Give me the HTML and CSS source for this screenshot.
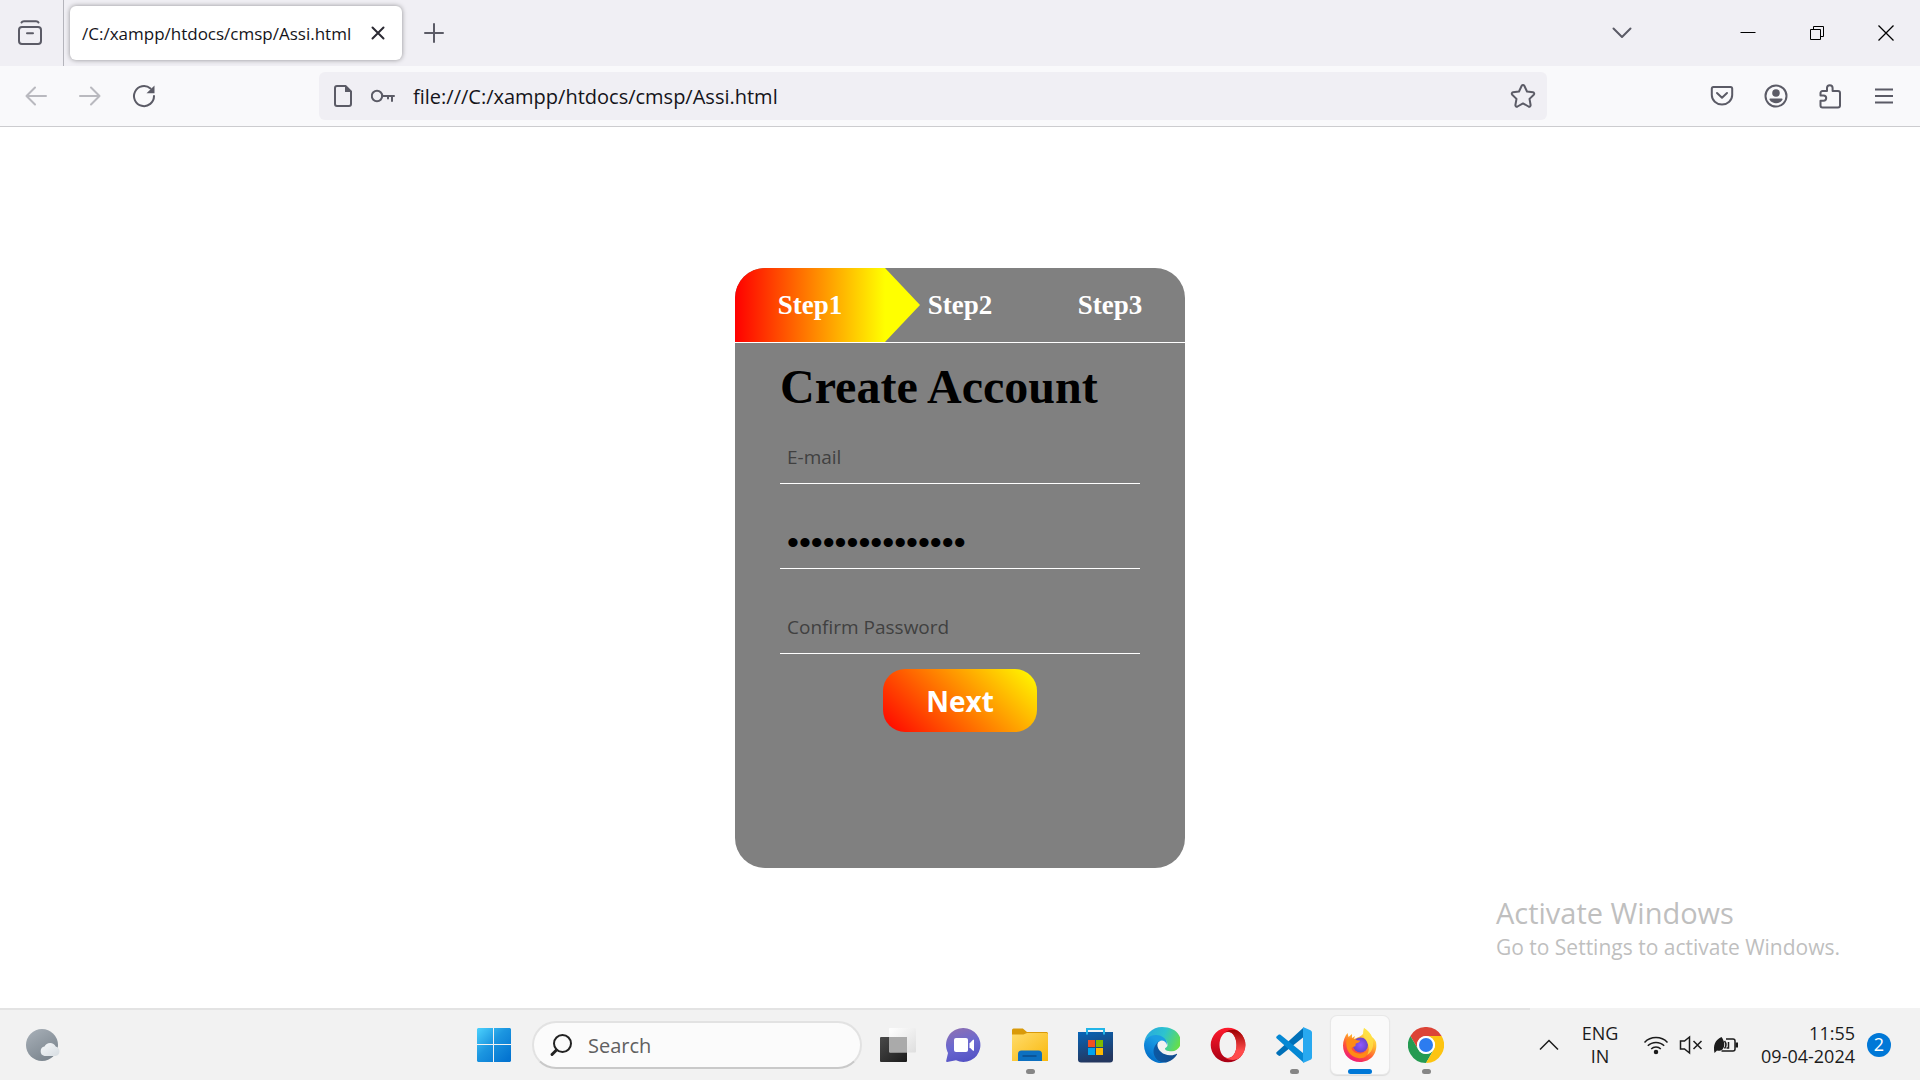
FILE: index.html
```html
<!DOCTYPE html>
<html lang="en">
<head>
<meta charset="utf-8">
<title>/C:/xampp/htdocs/cmsp/Assi.html</title>
<link rel="stylesheet" href="styles.css">
</head>
<body>
<div class="desktop">
  <header class="tabbar">
    <button class="view-button" aria-label="Firefox View">
      <svg class="icon" width="26" height="26" viewBox="0 0 26 26"><rect x="2" y="7" width="22" height="17" rx="3"/><path d="M4.500 2.500C5 1.500 6 1.200 7 1.200h12c1 0 2 .3 2.500 1.300M10 13.200h6"/></svg>
    </button>
    <div class="tab">
      <span class="tab-title">/C:/xampp/htdocs/cmsp/Assi.html</span>
      <button class="tab-close" aria-label="Close tab"><svg class="icon dark" width="14" height="14" viewBox="0 0 14 14"><path d="M1.500 1.500l11 11M12.500 1.500l-11 11"/></svg></button>
    </div>
    <button class="tool" aria-label="New tab"><svg class="icon" width="20" height="20" viewBox="0 0 20 20"><path d="M10 1v18M1 10h18"/></svg></button>
    <button class="tool tab-list" aria-label="List all tabs"><svg class="icon" width="20" height="12" viewBox="0 0 20 12"><path d="M1.500 1.500l8.500 8.500 8.500-8.500"/></svg></button>
    <div class="window-controls">
      <button aria-label="Minimize"><svg class="icon thin" width="16" height="16" viewBox="0 0 16 16"><path d="M.5 7.500h15"/></svg></button>
      <button aria-label="Restore"><svg class="icon thin" width="16" height="16" viewBox="0 0 16 16"><path d="M1.500 4.500h10v10h-10zM4.500 4V1.500h10v10H12"/></svg></button>
      <button aria-label="Close"><svg class="icon thin" width="16" height="16" viewBox="0 0 16 16"><path stroke-width="1.300" d="M.5.5l15 15M15.500.5l-15 15"/></svg></button>
    </div>
  </header>

  <nav class="toolbar" aria-label="Navigation">
    <button class="tool faded" aria-label="Back"><svg class="icon" width="22" height="20" viewBox="0 0 22 20"><path d="M21 10H1.500M10 1.500L1.500 10l8.500 8.500"/></svg></button>
    <button class="tool faded" aria-label="Forward"><svg class="icon" width="22" height="20" viewBox="0 0 22 20"><path d="M1 10h19.500M12 1.500l8.500 8.500-8.500 8.500"/></svg></button>
    <button class="tool" aria-label="Reload"><svg class="icon" width="24" height="24" viewBox="0 0 24 24"><path d="M22 12A10 10 0 1 1 18.500 4.500"/><path class="solid" d="M22.500 1.500v7.700h-8z"/></svg></button>
    <div class="urlbar">
      <svg class="icon" width="20" height="24" viewBox="0 0 20 24"><path d="M4 2h8.500l5.500 5.500V20a2 2 0 0 1-2 2H4a2 2 0 0 1-2-2V4a2 2 0 0 1 2-2z"/><path class="solid" d="M12 1.500l6.500 6.500H12z"/></svg>
      <svg class="icon" width="24" height="16" viewBox="1 0 24 16"><circle cx="7" cy="8" r="5.200"/><path d="M12.200 8H24M22 8v5M18 8v2.500"/></svg>
      <input class="url-input" type="text" aria-label="Address" value="file:///C:/xampp/htdocs/cmsp/Assi.html">
      <button class="star" aria-label="Bookmark this page"><svg class="icon" width="26" height="26" viewBox="0 0 26 26"><path d="M11.700 2.800a1.500 1.500 0 0 1 2.600 0l2.700 5.700 6 .8c1.200.2 1.600 1.500.8 2.400l-4.300 4.200 1.100 6.100c.2 1.100-1 2-2.100 1.500L13 20.400l-5.500 3.100c-1.100.5-2.300-.4-2.100-1.500L6.500 15.900 2.200 11.700c-.8-.9-.4-2.200.8-2.400l6-.8z"/></svg></button>
    </div>
    <button class="tool" aria-label="Save to Pocket"><svg class="icon" width="24" height="22" viewBox="0 0 24 22"><path d="M3.500 2h17A1.800 1.800 0 0 1 22.200 3.800V10a10.200 9.500 0 0 1-20.400 0V3.800A1.800 1.800 0 0 1 3.500 2zM7 8l5 4.800L17 8"/></svg></button>
    <button class="tool" aria-label="Account"><svg class="icon" width="24" height="24" viewBox="0 0 24 24"><circle cx="12" cy="12" r="10.500"/><circle class="fill" cx="12" cy="9" r="3.800"/><path class="fill" d="M6.200 14.500h11.600c.8 0 .9 1 .5 1.600-2.700 4.200-9.900 4.200-12.600 0-.4-.6-.3-1.600.5-1.600z"/></svg></button>
    <button class="tool" aria-label="Extensions"><svg class="icon" width="24" height="26" viewBox="0 0 24 26"><path d="M4.500 8H9V5a2.800 2.800 0 0 1 5.600 0v3H20a2 2 0 0 1 2 2v12.500a2 2 0 0 1-2 2H4.500a2 2 0 0 1-2-2v-4.700h3a2.700 2.700 0 0 0 0-5.400h-3V10a2 2 0 0 1 2-2z"/></svg></button>
    <button class="tool" aria-label="Menu"><svg class="icon" width="18" height="16" viewBox="0 0 18 16"><path d="M0 1.500h18M0 8h18M0 14.500h18"/></svg></button>
  </nav>

  <main class="page">
    <section class="card">
      <ol class="steps">
        <li class="step current">Step1</li>
        <li class="step">Step2</li>
        <li class="step">Step3</li>
      </ol>
      <form class="form">
        <h1 class="form-title">Create Account</h1>
        <input class="field" type="email" placeholder="E-mail" aria-label="E-mail">
        <input class="field secret" type="password" value="mysecretpasswrd" aria-label="Password">
        <input class="field" type="password" placeholder="Confirm Password" aria-label="Confirm Password">
        <button class="next" type="button">Next</button>
      </form>
    </section>
    <aside class="activation">
      <p class="activation-title">Activate Windows</p>
      <p class="activation-text">Go to Settings to activate Windows.</p>
    </aside>
  </main>

  <footer class="taskbar">
    <button class="widgets" aria-label="Weather">
      <svg width="36" height="36" viewBox="0 0 36 36"><defs><linearGradient id="moon" x2=".6" y2="1"><stop stop-color="#a9b1b9"/><stop offset="1" stop-color="#7c868f"/></linearGradient><linearGradient id="cloud" x2="1" y2="1"><stop stop-color="#f6f8fa"/><stop offset="1" stop-color="#d6dce1"/></linearGradient></defs><circle cx="17" cy="18" r="16" fill="url(#moon)"/><path fill="url(#cloud)" d="M19.500 29a4.800 4.800 0 0 1 0-9.400 6.200 6.200 0 0 1 11.200 0A4.800 4.800 0 0 1 30.500 29z"/></svg>
    </button>
    <div class="apps">
      <button class="app" aria-label="Start"><svg width="36" height="36" viewBox="0 0 36 36"><defs><linearGradient id="win" gradientUnits="userSpaceOnUse" x2="32" y2="32"><stop stop-color="#50d6ff"/><stop offset=".5" stop-color="#1c96e0"/><stop offset="1" stop-color="#0474d0"/></linearGradient></defs><path fill="url(#win)" d="M2 1h15v16H1V2zM18 1h16l1 1v15H18zM1 18h16v17H2l-1-1zM18 18h17v16l-1 1H18z"/></svg></button>
      <label class="search">
        <svg width="24" height="24" viewBox="0 0 24 24" fill="none" stroke="#222" stroke-width="2" stroke-linecap="round"><circle cx="13.500" cy="10.500" r="8.500"/><path stroke-width="3" d="M7.500 17L3 21.500"/></svg>
        <input class="search-input" type="text" placeholder="Search" aria-label="Search">
      </label>
      <button class="app" aria-label="Task view"><svg width="36" height="36" viewBox="0 0 36 36"><defs><linearGradient id="tv1" x2="1" y2="1"><stop stop-color="#4a4a4a"/><stop offset="1" stop-color="#1b1b1b"/></linearGradient><linearGradient id="tv2" x2="1" y2="1"><stop stop-color="#fff"/><stop offset="1" stop-color="#dedede"/></linearGradient></defs><rect y="10" width="27" height="25" rx="1" fill="url(#tv1)"/><rect x="9" y="1" width="27" height="24.500" rx="1" fill="url(#tv2)"/><path fill="#aaa" d="M9 10h18v15H9z"/></svg></button>
      <button class="app" aria-label="Chat"><svg width="36" height="36" viewBox="0 0 36 36"><defs><linearGradient id="chat" x1=".3" x2=".6" y2="1"><stop stop-color="#8c70b4"/><stop offset=".5" stop-color="#6a68d0"/><stop offset="1" stop-color="#5452c4"/></linearGradient></defs><path fill="url(#chat)" d="M17.500 1a17 17 0 1 1-7.500 32.300L1.200 35c-.8.100-1.200-.4-1-1.200L2 26A17 17 0 0 1 17.500 1z"/><rect x="8" y="11" width="14" height="14" rx="2" fill="#fff"/><path fill="#fff" d="M23.500 16.500l3.500-3.800h1v11h-1l-3.500-3.500z"/></svg></button>
      <button class="app running" aria-label="File Explorer"><svg width="36" height="36" viewBox="0 0 36 36"><defs><linearGradient id="fold" x2="1" y2="1"><stop stop-color="#ffdc6c"/><stop offset="1" stop-color="#f9b80d"/></linearGradient></defs><path fill="#d99a0a" d="M0 3a1.500 1.500 0 0 1 1.500-1.500h9.300L15 5h20l1 1v5H0z"/><path fill="url(#fold)" d="M0 7.500h11.500L15 6h20l1 1v27H0z"/><path fill="#0d70c0" d="M6 34v-7a3.500 3.500 0 0 1 3.500-3.500h17A3.500 3.500 0 0 1 30 27v7z"/><path stroke="#0a4c8d" stroke-width="1.500" d="M10.500 29h14"/></svg></button>
      <button class="app" aria-label="Microsoft Store"><svg width="36" height="36" viewBox="0 0 36 36"><defs><linearGradient id="store" x2=".3" y2="1"><stop stop-color="#0765b8"/><stop offset="1" stop-color="#24375f"/></linearGradient></defs><path fill="url(#store)" d="M0 5h35v27.500a3 3 0 0 1-3 3H3a3 3 0 0 1-3-3z"/><path fill="none" stroke="#22b5e8" stroke-width="2" d="M9 7.500V2h17v5.500"/><path fill="#f25022" d="M10 13h7v7h-7z"/><path fill="#7fba00" d="M18 13h7v7h-7z"/><path fill="#00a4ef" d="M10 21h7v7h-7z"/><path fill="#ffb900" d="M18 21h7v7h-7z"/></svg></button>
      <button class="app" aria-label="Microsoft Edge"><svg width="36" height="36" viewBox="0 0 256 256"><defs><linearGradient id="e1" x1=".1" y1=".8" x2="1" y2=".7"><stop stop-color="#0c59a4"/><stop offset="1" stop-color="#114a8b"/></linearGradient><linearGradient id="e2" x1=".7" y1=".3" x2=".3" y2="1"><stop stop-color="#1b9de2"/><stop offset=".5" stop-color="#0d84d9"/><stop offset="1" stop-color="#0067c0"/></linearGradient><linearGradient id="e3" x2="1" y1=".3" y2=".6"><stop stop-color="#27a8df"/><stop offset=".5" stop-color="#2dc3cf"/><stop offset="1" stop-color="#67df46"/></linearGradient></defs><path fill="url(#e1)" d="M231 190a94 94 0 0 1-11 5 102 102 0 0 1-36 6c-47 0-89-33-89-74a31 31 0 0 1 17-27c-43 2-54 46-54 72 0 74 68 81 82 81 8 0 20-2 27-5l1 0a128 128 0 0 0 67-53 4 4 0 0 0-4-5z"/><path fill="url(#e2)" d="M106 241a79 79 0 0 1-23-21 81 81 0 0 1 30-120c3-1 8-4 15-4a32 32 0 0 1 25 13 32 32 0 0 1 7 19c0-1 24-80-80-80C36 48 0 90 0 128a130 130 0 0 0 12 56 128 128 0 0 0 156 67 75 75 0 0 1-62-10z"/><path fill="url(#e3)" d="M152 149c-1 1-3 3-3 6 0 3 2 6 5 8 15 11 44 9 44 9a63 63 0 0 0 32-9 65 65 0 0 0 32-56c0-24-8-39-12-46C230 20 182 0 128 0A128 128 0 0 0 0 126C1 88 39 57 84 57c4 0 24 0 43 10 17 9 26 20 32 30 7 12 8 26 8 32 0 5-3 14-15 20z"/></svg></button>
      <button class="app" aria-label="Opera"><svg width="36" height="36" viewBox="0 0 36 36"><defs><linearGradient id="o1" x2="0" y2="1"><stop stop-color="#ff1b2d"/><stop offset="1" stop-color="#a70014"/></linearGradient><linearGradient id="o2" x2="0" y2="1"><stop stop-color="#9c0000"/><stop offset=".7" stop-color="#ff4b4b"/></linearGradient></defs><path fill="url(#o1)" fill-rule="evenodd" d="M18 .7a17.300 17.300 0 1 0 0 34.600 17.300 17.300 0 1 0 0-34.600zM18 5c5 0 8.500 6 8.500 13S23 31 18 31 9.500 25 9.500 18 13 5 18 5z"/><path fill="url(#o2)" d="M14.500 5.500C22 1 27 3 30 5.500a17 17 0 0 1 0 25C27 33 21 34.500 15 30.500c7 2.500 11.500-4 11.500-12.500S22 2.500 14.500 5.500z"/></svg></button>
      <button class="app running" aria-label="Visual Studio Code"><svg width="36" height="36" viewBox="0 0 36 36"><path fill="#0070b8" d="M27 1L.8 25a1.500 1.500 0 0 0 0 2.200L2.500 28.500c.6.500 1.400.5 2 0L27 10.500z"/><path fill="#0588d4" d="M27 35L.8 11.500a1.500 1.500 0 0 1 0-2.200L2.500 7.800c.6-.5 1.400-.5 2 0L27 26z"/><path fill="#28a9f0" d="M27 0l7.500 3.200A2.500 2.500 0 0 1 36 5.500v25c0 1-.6 1.900-1.500 2.300L27 36z"/></svg></button>
      <button class="app running active" aria-label="Firefox"><svg width="36" height="36" viewBox="0 0 36 36"><defs><linearGradient id="f1" x1=".8" y1=".1" x2=".3" y2="1"><stop stop-color="#fff44f"/><stop offset=".35" stop-color="#ffb02e"/><stop offset=".65" stop-color="#ff5634"/><stop offset="1" stop-color="#ed167e"/></linearGradient><radialGradient id="f2"><stop stop-color="#9059ff"/><stop offset="1" stop-color="#6b44c8"/></radialGradient></defs><path fill="url(#f1)" d="M22 1c6 4 7 7 8 9 2 1 3 3 4 5 2 11-5 20-16 20C8 35 1 28 1 18.500 1 14 3 9 5.500 6l1 4L10 7v4l3-2-1 3c9-3 11-6 10-11z"/><circle cx="18.500" cy="18" r="7.500" fill="url(#f2)"/><path fill="#ff8b16" d="M4.500 13c3-3 6-1.500 8-.8 2 1.300 4 1 5.500 1.300.3 2-4 2.500-4.500 3.500 1 3.500-2.500 2-4 4C11 28 24 29 27 21c0 9-6 11-11 10C8 30 3 22 4.500 13z"/><path fill="#ffe045" d="M22 1c6 4 10 10 9 18-1 5-3 7-6 9 3-5 2-10-1-15-3-4-4-7-2-12z" opacity=".8"/></svg></button>
      <button class="app running" aria-label="Chrome"><svg width="36" height="36" viewBox="0 0 36 36"><path fill="#dc4437" d="M2.400 9A18 18 0 0 1 33.600 9H18a9 9 0 0 0-7.800 13.500z"/><path fill="#259b52" d="M2.400 9A18 18 0 0 0 18 36l7.800-13.500a9 9 0 0 1-15.600 0z"/><path fill="#fdc411" d="M33.600 9A18 18 0 0 1 18 36l7.800-13.500A9 9 0 0 0 18 9z"/><circle cx="18" cy="18" r="9" fill="#fff"/><circle cx="18" cy="18" r="7" fill="#2c7cf0"/></svg></button>
    </div>
    <div class="tray">
      <button class="tray-more" aria-label="Show hidden icons"><svg class="tray-icon" width="20" height="12" viewBox="0 0 20 12"><path d="M1 10.500l9-9 9 9"/></svg></button>
      <button class="language">ENG<br>IN</button>
      <button class="status" aria-label="Network, sound and battery">
        <svg class="tray-icon" width="26" height="20" viewBox="0 0 26 20"><path d="M1.500 7.500a16 16 0 0 1 23 0M4.800 10.800a11.600 11.600 0 0 1 16.400 0M8.200 14a6.800 6.800 0 0 1 9.600 0"/><circle cx="13" cy="17" r="1.500" fill="#1b1b1b"/></svg>
        <svg class="tray-icon" width="24" height="20" viewBox="0 0 24 20"><path d="M1.500 6h4L10.500 2v16l-5-4h-4zM14.500 6l8 8M22.500 6l-8 8"/></svg>
        <svg class="tray-icon" width="26" height="20" viewBox="0 0 26 20"><path fill="#1b1b1b" stroke="none" d="M1.500 18C0 10 2 5 8.500 2c3 4 4 9 1 12.500-2 1.500-4 1.500-5.500 1z"/><path d="M13 4h7a2 2 0 0 1 2 2v8a2 2 0 0 1-2 2H8.500M11.500 6c2 2.500 1.500 5.500 0 7.500M15.500 7v6h-2"/><path fill="#1b1b1b" stroke="none" d="M22.500 7.500h2.500v5h-2.500z"/></svg>
      </button>
      <button class="clock">11:55<br>09-04-2024</button>
      <span class="badge">2</span>
    </div>
  </footer>
</div>
</body>
</html>
```
FILE: styles.css
```css
* {
  box-sizing: border-box;
}

body {
  margin: 0;
  font-family: "Open Sans", "Noto Sans", sans-serif;
  color: #15141a;
  background: #fff;
}

button,
input {
  margin: 0;
  padding: 0;
  border: 0;
  background: none;
  font: inherit;
  color: inherit;
  outline: 0;
}

button {
  display: flex;
  align-items: center;
  justify-content: center;
}

svg {
  display: block;
  flex: none;
}

.desktop {
  display: flex;
  flex-direction: column;
  min-height: 100vh;
}

.icon {
  fill: none;
  stroke: #5b5b66;
  stroke-width: 2;
  stroke-linecap: round;
  stroke-linejoin: round;
}

.icon .solid,
.icon .fill {
  fill: #5b5b66;
  stroke: none;
}

.icon.dark {
  stroke: #2b2a33;
}

.icon.thin {
  stroke: #000;
  stroke-width: 1;
  stroke-linecap: butt;
  stroke-linejoin: miter;
}

/* Tab strip */
.tabbar {
  display: flex;
  align-items: center;
  height: 66px;
  background: #f0eff4;
}

.view-button {
  width: 64px;
  height: 66px;
  padding-right: 3px;
  border-right: 1px solid #b4b4bb;
}

.tab {
  display: flex;
  align-items: center;
  justify-content: space-between;
  width: 332px;
  height: 54px;
  margin: 0 5px 0 6px;
  padding: 0 10px 0 12px;
  border-radius: 6px;
  background: #fff;
  box-shadow: 0 0 5px rgba(0, 0, 0, 0.4);
}

.tab-title {
  font-size: 17px;
  white-space: nowrap;
}

.tab-close {
  width: 28px;
  height: 28px;
}

.tool {
  width: 54px;
  height: 54px;
  flex: none;
}

.faded {
  opacity: 0.4;
}

.tab-list {
  margin: 0 64px 0 auto;
}

.window-controls {
  display: flex;
}

.window-controls button {
  width: 69px;
  height: 66px;
}

/* Navigation toolbar */
.toolbar {
  display: flex;
  align-items: center;
  height: 61px;
  padding: 0 9px;
  background: #f9f9fb;
  border-bottom: 1px solid #cccccf;
}

.urlbar {
  display: flex;
  align-items: center;
  flex: 1;
  height: 48px;
  margin: 0 148px;
  padding: 0 9px 0 14px;
  gap: 18px;
  border-radius: 6px;
  background: #f0eff4;
}

.url-input {
  flex: 1;
  min-width: 0;
  height: 48px;
  font-size: 20px;
}

.star {
  width: 30px;
  height: 48px;
}

/* Page content */
.page {
  position: relative;
  flex: 1;
  display: flex;
  justify-content: center;
  align-items: flex-start;
  padding: 141px 0 140px;
}

.card {
  width: 450px;
  min-height: 600px;
  overflow: hidden;
  border-radius: 30px;
  background: #808080;
}

.steps {
  display: grid;
  grid-template-columns: repeat(3, 1fr);
  margin: 0;
  padding: 0;
  list-style: none;
  border-bottom: 1px solid #fff;
}

.step {
  position: relative;
  height: 74px;
  font: bold 27px/74px "Liberation Serif", serif;
  text-align: center;
  color: #fff;
}

.current {
  background: linear-gradient(90deg, #f00, #ff0);
}

.current::after {
  content: "";
  position: absolute;
  top: 0;
  left: 100%;
  width: 35px;
  height: 74px;
  background: #ff0;
  clip-path: polygon(0 0, 100% 50%, 0 100%);
}

.form {
  display: flex;
  flex-direction: column;
  padding: 16px 45px 0;
}

.form-title {
  margin: 0;
  font: bold 48px/55px "Liberation Serif", serif;
  color: #000;
}

.field {
  height: 51px;
  margin: 19px 0 15px;
  padding: 0 7px 2px;
  border-bottom: 1px solid #fff;
  font-size: 19px;
  color: #000;
}

.field::placeholder {
  color: #404040;
  opacity: 1;
}

.secret {
  font-family: "Liberation Sans", sans-serif;
  font-size: 34px;
}

.next {
  align-self: center;
  width: 154px;
  height: 63px;
  border-radius: 22px;
  background: linear-gradient(45deg, #f00, #ff0);
  font-size: 28px;
  font-weight: 700;
  color: #fff;
}

/* Windows activation notice */
.activation {
  position: absolute;
  right: 80px;
  bottom: 46px;
  color: #bfbfbf;
}

.activation p {
  margin: 0;
}

.activation-title {
  font-size: 29px;
  line-height: 38px;
}

.activation-text {
  font-size: 21px;
  line-height: 30px;
}

/* Taskbar */
.taskbar {
  display: grid;
  grid-template-columns: 1fr auto 1fr;
  align-items: center;
  height: 72px;
  padding-top: 2px;
  background: linear-gradient(#e3e3e3, #e3e3e3) 0 0 / calc(100% - 390px) 2px no-repeat #f2f2f2;
}

.widgets {
  width: 60px;
  height: 60px;
  margin-left: 13px;
}

.apps {
  display: flex;
  align-items: center;
}

.app {
  position: relative;
  width: 58px;
  height: 58px;
  margin: 0 4px;
  border-radius: 6px;
}

.active {
  background: #fafafa;
  box-shadow: 0 0 0 1px #e8e8e8, 0 1px 1px 1px #dcdcdc;
}

.running::after {
  content: "";
  position: absolute;
  bottom: 0;
  left: 50%;
  width: 9px;
  height: 5px;
  margin-left: -4px;
  border-radius: 3px;
  background: #868686;
}

.active::after {
  width: 24px;
  margin-left: -12px;
  background: #0078d7;
}

.search {
  display: flex;
  align-items: center;
  width: 330px;
  height: 48px;
  margin: 0 3px 0 5px;
  padding: 0 15px;
  gap: 15px;
  border: 2px solid #e2e2e2;
  border-bottom-color: #c9c9c9;
  border-radius: 24px;
  background: #fbfbfb;
}

.search-input {
  flex: 1;
  min-width: 0;
  font-size: 20px;
}

.search-input::placeholder {
  color: #606060;
  opacity: 1;
}

.tray {
  display: flex;
  align-items: center;
  justify-content: flex-end;
  padding-right: 29px;
  font-size: 18px;
  line-height: 23px;
  color: #1b1b1b;
}

.tray-icon {
  fill: none;
  stroke: #1b1b1b;
  stroke-width: 1.5;
}

.tray-more {
  width: 40px;
  height: 48px;
  margin-right: 12px;
}

.language {
  width: 38px;
  text-align: center;
}

.status {
  gap: 10px;
  margin: 0 22px 0 24px;
}

.clock {
  text-align: right;
}

.badge {
  width: 24px;
  height: 24px;
  margin-left: 12px;
  border-radius: 12px;
  background: #0078d7;
  font-size: 18px;
  line-height: 23px;
  text-align: center;
  color: #fff;
}
```
